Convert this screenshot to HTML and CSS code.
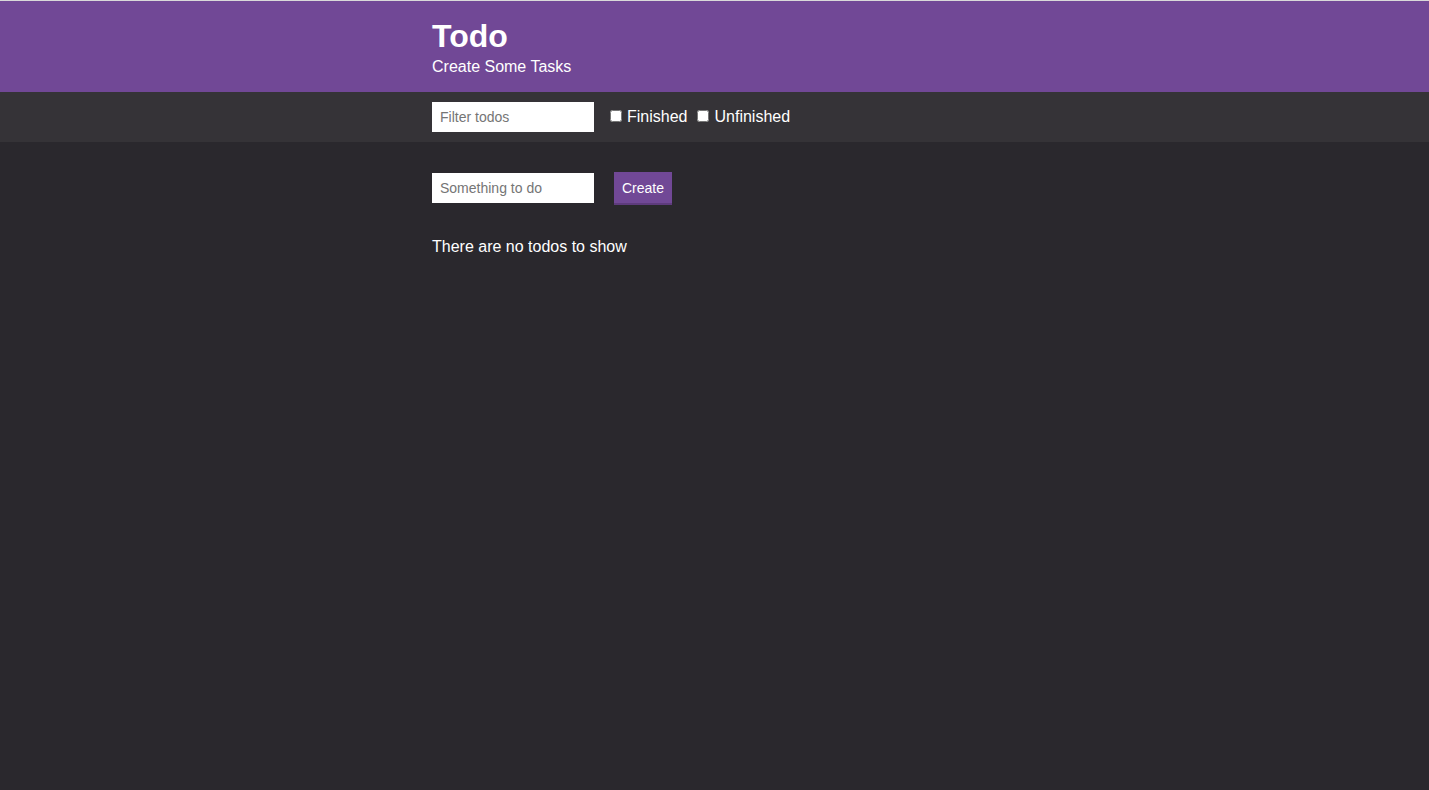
FILE: index.html
```html
<!DOCTYPE html>
<html>
<head>
<meta charset="utf-8">
<link rel="stylesheet" href="styles.css">
</head>
<body>
<header class="header">
  <div class="container">
    <h1 class="title">Todo</h1>
    <h2 class="subtitle">Create Some Tasks</h2>
  </div>
</header>
<div class="filters">
  <div class="container filters-row">
    <input class="input" type="text" placeholder="Filter todos">
    <label class="check"><input type="checkbox"> Finished</label>
    <label class="check"><input type="checkbox"> Unfinished</label>
  </div>
</div>
<main class="container main">
  <form class="create-row">
    <input class="input" type="text" placeholder="Something to do">
    <button class="button" type="button">Create</button>
  </form>
  <p class="empty">There are no todos to show</p>
</main>
</body>
</html>
```
FILE: styles.css
```css
html, body {
  margin: 0;
  padding: 0;
  background: #2a282d;
  color: #ffffff;
  font-family: "Liberation Sans", Arial, sans-serif;
  height: 100%;
}
body {
  border-top: 1px solid #d9d9d9;
  box-sizing: border-box;
}
.container {
  width: 565px;
  margin: 0 auto;
}
.header {
  background: #714896;
  padding: 16px 0 14px;
}
.title {
  margin: 0;
  font-size: 32px;
  line-height: 38px;
  font-weight: bold;
}
.subtitle {
  margin: 0;
  font-size: 16px;
  font-weight: normal;
  line-height: 23px;
}
.filters {
  background: #353337;
  height: 50px;
}
.filters-row {
  display: flex;
  align-items: center;
  height: 50px;
}
.input {
  box-sizing: border-box;
  width: 162px;
  height: 30px;
  border: none;
  padding: 0 8px;
  font-family: "Liberation Sans", Arial, sans-serif;
  font-size: 14px;
  color: #333;
  background: #fff;
  outline: none;
}
.input::placeholder {
  color: #757575;
}
.check {
  display: flex;
  align-items: center;
  font-size: 16px;
  margin-left: 16px;
  color: #fff;
}
.check + .check {
  margin-left: 10px;
}
.check input {
  width: 12px;
  height: 12px;
  margin: 0 5px 2px 0;
}
.main {
  padding-top: 30px;
}
.create-row {
  display: flex;
  align-items: flex-start;
  margin: 0;
}
.create-row .input {
  margin-top: 1px;
}
.button {
  margin-left: 20px;
  background: #714896;
  color: #fff;
  border: none;
  border-bottom: 2px solid #5e3b7d;
  height: 33px;
  padding: 0 8px;
  font-family: "Liberation Sans", Arial, sans-serif;
  font-size: 14px;
  cursor: pointer;
}
.empty {
  margin: 32px 0 0;
  font-size: 16px;
  line-height: 20px;
}
```
